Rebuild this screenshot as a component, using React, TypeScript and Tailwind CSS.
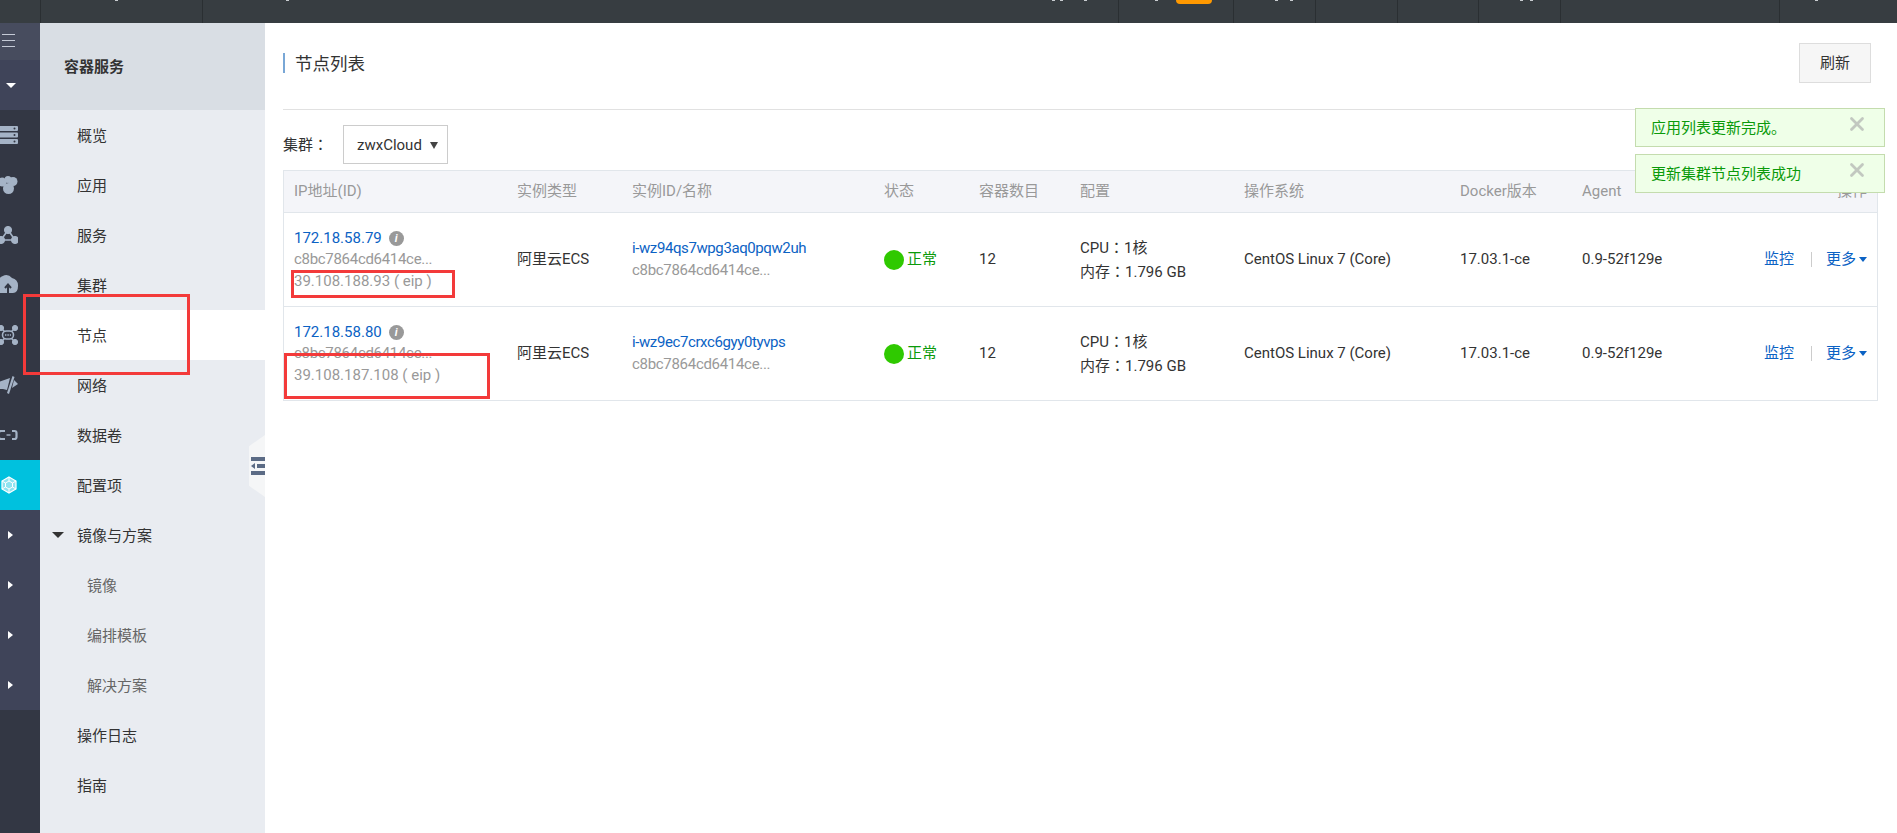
import React from 'react';
import { X } from 'lucide-react';

const FONT = 'font-["Roboto","Noto_Sans_CJK_SC",sans-serif]';

const headSeparators = [40, 202, 1118, 1233, 1315, 1397, 1478, 1560, 1779];
const headSpecks = [115, 286, 1052, 1060, 1084, 1155, 1275, 1290, 1520, 1530, 1815];

const navItems = [
  { label: '概览' },
  { label: '应用' },
  { label: '服务' },
  { label: '集群' },
  { label: '节点', active: true },
  { label: '网络' },
  { label: '数据卷' },
  { label: '配置项' },
  { label: '镜像与方案', open: true },
  { label: '镜像', sub: true },
  { label: '编排模板', sub: true },
  { label: '解决方案', sub: true },
  { label: '操作日志' },
  { label: '指南' },
];

const nodes = [
  { ip: '172.18.58.79', eip: '39.108.188.93 ( eip )', instance: 'i-wz94qs7wpg3aq0pqw2uh' },
  { ip: '172.18.58.80', eip: '39.108.187.108 ( eip )', instance: 'i-wz9ec7crxc6gyy0tyvps' },
];

const gridCols = 'grid grid-cols-[223px_115px_252px_95px_101px_164px_216px_122px_140px_1fr] pl-[10px] pr-[10px]';

function Colon() {
  return <span className='font-["Noto_Sans_CJK_TC"]'>：</span>;
}

function RailIcon({ name }: { name: string }) {
  const c = '#a5b3c6';
  return (
    <svg width="18" height="20" viewBox="0 0 18 20" className="block">
      {name === 'server' && (
        <g fill={c}>
          <rect x="-4" y="1" width="22" height="5" rx="1" />
          <rect x="-4" y="7.5" width="22" height="5" rx="1" />
          <rect x="-4" y="14" width="22" height="5" rx="1" />
          <circle cx="14.5" cy="3.5" r="1" fill="#333744" />
          <circle cx="14.5" cy="10" r="1" fill="#333744" />
          <circle cx="14.5" cy="16.5" r="1" fill="#333744" />
        </g>
      )}
      {name === 'cluster' && (
        <g fill={c}>
          <circle cx="2" cy="7" r="4.5" />
          <circle cx="13" cy="6.5" r="4.5" />
          <circle cx="8" cy="4.5" r="3.5" />
          <circle cx="8.5" cy="13.5" r="5.5" />
        </g>
      )}
      {name === 'share' && (
        <g fill={c} stroke={c}>
          <path d="M8 5 L1 15 L15 15 Z" fill="none" strokeWidth="1.6" />
          <circle cx="8" cy="5" r="3.6" />
          <circle cx="1" cy="15" r="3.6" />
          <circle cx="15" cy="15" r="3.6" />
        </g>
      )}
      {name === 'cloud' && (
        <g>
          <path d="M-6 18 a6 6 0 0 1 4-9 a8 8 0 0 1 14-6 a8 8 0 0 1 6 8 q0 7-5 7 Z" fill={c} />
          <path d="M8 18 V11 M5 13 L8 9.5 L11 13" stroke="#333744" strokeWidth="2" fill="none" />
        </g>
      )}
      {name === 'network' && (
        <g fill={c} stroke={c}>
          <path d="M1 3 L15 17 M15 3 L1 17" strokeWidth="1.4" />
          <circle cx="1" cy="3" r="2.6" />
          <circle cx="15" cy="3" r="2.6" />
          <circle cx="1" cy="17" r="2.6" />
          <circle cx="15" cy="17" r="2.6" />
          <rect x="2.5" y="6" width="11" height="8" rx="4" fill="#333744" strokeWidth="1.6" />
          <path d="M5 10 H11" strokeWidth="1.4" strokeDasharray="1.4 1" fill="none" />
        </g>
      )}
      {name === 'speaker' && (
        <g fill={c}>
          <path d="M-4 8 L10 3 L7 15 L3 14 L-4 14 Z" />
          <path d="M12.5 1 L14.5 2 L9 19 L7 18 Z" />
          <path d="M14 5 L18 9 L12 13 Z" />
        </g>
      )}
      {name === 'link' && (
        <g fill="none" stroke={c} strokeWidth="2.2">
          <path d="M5 6 H1 a2.5 2.5 0 0 0-2.5 2.5 v3 a2.5 2.5 0 0 0 2.5 2.5 H5" />
          <path d="M12 6 H14.5 a2 2 0 0 1 2 2 v4 a2 2 0 0 1-2 2 H12" />
          <path d="M6.5 10 H10.5" strokeWidth="1.4" />
        </g>
      )}
    </svg>
  );
}

function IconRail() {
  const icons = ['server', 'cluster', 'share', 'cloud', 'network', 'speaker', 'link'];
  return (
    <div className="w-10 shrink-0 bg-[#333744] flex flex-col overflow-hidden">
      <div className="h-[37px] bg-[#474c5e] flex flex-col gap-[5px] pl-[2px] pt-[11px]">
        <div className="w-[13px] h-[1px] bg-[#c5cad6]" />
        <div className="w-[13px] h-[1px] bg-[#c5cad6]" />
        <div className="w-[13px] h-[1px] bg-[#c5cad6]" />
      </div>
      <div className="h-[50px] bg-[#3f4459] flex items-center pl-[6px]">
        <div className="w-0 h-0 border-x-[5px] border-x-transparent border-t-[5px] border-t-white" />
      </div>
      {icons.map((name) => (
        <div key={name} className="h-[50px] flex items-center">
          <RailIcon name={name} />
        </div>
      ))}
      <div className="h-[50px] bg-[#00c1de] flex items-center pl-[1px]">
        <svg width="16" height="18" viewBox="0 0 16 18">
          <path d="M8 1 L15 5 V13 L8 17 L1 13 V5 Z" fill="#8fe3f0" stroke="#fff" strokeWidth="1.2" />
          <path d="M8 5 L11.5 7 V11 L8 13 L4.5 11 V7 Z M1 5 L4.5 7 M15 5 L11.5 7 M8 1 V5 M1 13 L4.5 11 M15 13 L11.5 11 M8 17 V13" fill="none" stroke="#fff" strokeWidth="1" />
        </svg>
      </div>
      <div className="bg-[#3f4459]">
        {[0, 1, 2, 3].map((i) => (
          <div key={i} className="h-[50px] flex items-center pl-[8px]">
            <div className="w-0 h-0 border-y-[4.5px] border-y-transparent border-l-[5px] border-l-white" />
          </div>
        ))}
      </div>
    </div>
  );
}

function SubNav() {
  return (
    <div className="w-[225px] shrink-0 bg-[#e9ecf1] relative">
      <div className="h-[87px] bg-[#d9dee4] flex items-center pl-[24px] pt-[1px] text-[15px] font-bold text-[#333]">容器服务</div>
      {navItems.map((item) => (
        <div
          key={item.label}
          className={`h-[50px] flex items-center pt-[2px] text-[15px] relative ${item.sub ? 'pl-[47px] text-[#666]' : 'pl-[37px] text-[#333]'} ${item.active ? 'bg-white' : ''}`}
        >
          {item.open && (
            <div className="absolute left-[12px] top-[22px] w-0 h-0 border-x-[6px] border-x-transparent border-t-[6px] border-t-[#333]" />
          )}
          {item.label}
        </div>
      ))}
      {/* collapse handle */}
      <div className="absolute right-0 top-[412px] w-4 h-[62px] bg-[#f5f6f7] [clip-path:polygon(0_18%,100%_0,100%_100%,0_82%)] flex flex-col items-end justify-center gap-[3px]">
        <div className="w-[14px] h-[4px] bg-[#5b6b85]" />
        <div className="w-[14px] h-[4px] flex items-center justify-between">
          <div className="w-0 h-0 border-y-[3px] border-y-transparent border-r-[4px] border-r-[#5b6b85]" />
          <div className="w-[8px] h-[4px] bg-[#5b6b85]" />
        </div>
        <div className="w-[14px] h-[4px] bg-[#5b6b85]" />
      </div>
    </div>
  );
}

function NodeRow({ node }: { node: (typeof nodes)[number] }) {
  return (
    <div className={`${gridCols} h-[94px] items-center border-t border-[#e1e6eb] text-[15px] leading-[21.5px] text-[#333]`}>
      <div className="pt-[1px]">
        <div className="flex items-center gap-[7px]">
          <span className="text-[#0b62c4]">{node.ip}</span>
          <span className="w-[15px] h-[15px] rounded-full bg-[#999] text-white text-[11px] leading-[15px] text-center italic font-bold">i</span>
        </div>
        <div className="text-[#999] tracking-[-0.3px]">c8bc7864cd6414ce...</div>
        <div className="text-[#999]">{node.eip}</div>
      </div>
      <div>阿里云ECS</div>
      <div>
        <div className="text-[#0b62c4] tracking-[-0.4px]">{node.instance}</div>
        <div className="text-[#999] tracking-[-0.3px]">c8bc7864cd6414ce...</div>
      </div>
      <div className="flex items-center gap-[3px] text-[#0a9a0a]">
        <span className="w-5 h-5 rounded-full bg-[#2fc900]" />
        正常
      </div>
      <div>12</div>
      <div>
        <div>CPU<Colon />1核</div>
        <div>内存<Colon />1.796 GB</div>
      </div>
      <div>CentOS Linux 7 (Core)</div>
      <div>17.03.1-ce</div>
      <div>0.9-52f129e</div>
      <div className="flex items-center justify-end text-[#0b62c4]">
        <span>监控</span>
        <span className="w-[1px] h-[15px] bg-[#ccc] ml-[17px] mr-[14px]" />
        <span>更多</span>
        <span className="ml-[3px] w-0 h-0 border-x-[4.5px] border-x-transparent border-t-[5px] border-t-[#0b62c4]" />
      </div>
    </div>
  );
}

function Toast({ text }: { text: string }) {
  return (
    <div className="h-[39px] bg-[#efffe8] border border-[#c4dcae] flex justify-between pl-[15px] pr-[16px] text-[15px] text-[#0a9a0a] leading-[38px]">
      {text}
      <X size={22} strokeWidth={3} className="text-[#c2c8c0] mt-[4px]" />
    </div>
  );
}

export default function App() {
  return (
    <div className={`relative h-[833px] w-[1897px] overflow-hidden bg-white flex flex-col ${FONT}`}>
      <header className="relative h-[23px] shrink-0 bg-[#373d41]">
        {headSeparators.map((x) => (
          <div key={x} className="absolute top-0 h-full w-[1px] bg-[#2a2f32]" style={{ left: x }} />
        ))}
        {headSpecks.map((x) => (
          <div key={x} className="absolute top-0 h-[1px] w-[3px] bg-[#c8ccd0]" style={{ left: x }} />
        ))}
        <div className="absolute top-0 left-[1176px] w-[36px] h-[4px] bg-[#ff9900] rounded-b-[4px]" />
      </header>

      <div className="flex flex-1 min-h-0">
        <IconRail />
        <SubNav />
        <main className="flex-1 pl-[18px] pr-[19px]">
          <div className="flex justify-between h-[87px] border-b border-[#e1e1e1] w-[1588px] pt-[20px]">
            <h1 className="h-[20px] mt-[10px] border-l-2 border-[#79a7d6] pl-[10px] pt-[2px] text-[17.5px] leading-[18px] text-[#333] font-normal">节点列表</h1>
            <button className="w-[72px] h-[40px] bg-[#f6f6f6] border border-[#ddd] text-[15px] text-[#333]">刷新</button>
          </div>
          <div className="flex items-center h-[39px] mt-[15px] text-[15px] text-[#333]">
            <span className="w-[60px]">集群<Colon /></span>
            <div className="w-[105px] h-[39px] border border-[#ccc] flex items-center justify-between pl-[13px] pr-[9px] pt-[2px]">
              zwxCloud
              <span className="w-0 h-0 border-x-[4px] border-x-transparent border-t-[7px] border-t-[#444]" />
            </div>
          </div>
          <div className="mt-[6px] border border-[#e1e6eb]">
            <div className={`${gridCols} h-[41px] items-center bg-[#f4f5f9] text-[15px] text-[#999]`}>
              {['IP地址(ID)', '实例类型', '实例ID/名称', '状态', '容器数目', '配置', '操作系统', 'Docker版本', 'Agent'].map((h) => (
                <div key={h}>{h}</div>
              ))}
              <div className="text-right">操作</div>
            </div>
            {nodes.map((n) => (
              <NodeRow key={n.ip} node={n} />
            ))}
          </div>
        </main>
      </div>

      {/* toasts */}
      <div className="absolute left-[1635px] top-[108px] w-[250px] flex flex-col gap-[7px]">
        <Toast text="应用列表更新完成。" />
        <Toast text="更新集群节点列表成功" />
      </div>

      {/* hand-drawn annotation boxes */}
      <div className="absolute left-[23px] top-[294px] w-[167px] h-[81px] border-[3px] border-[#f33a3a]" />
      <div className="absolute left-[291px] top-[270px] w-[164px] h-[28px] border-[3px] border-[#f33a3a]" />
      <div className="absolute left-[284px] top-[353px] w-[206px] h-[46px] border-[3px] border-[#f33a3a]" />
    </div>
  );
}
